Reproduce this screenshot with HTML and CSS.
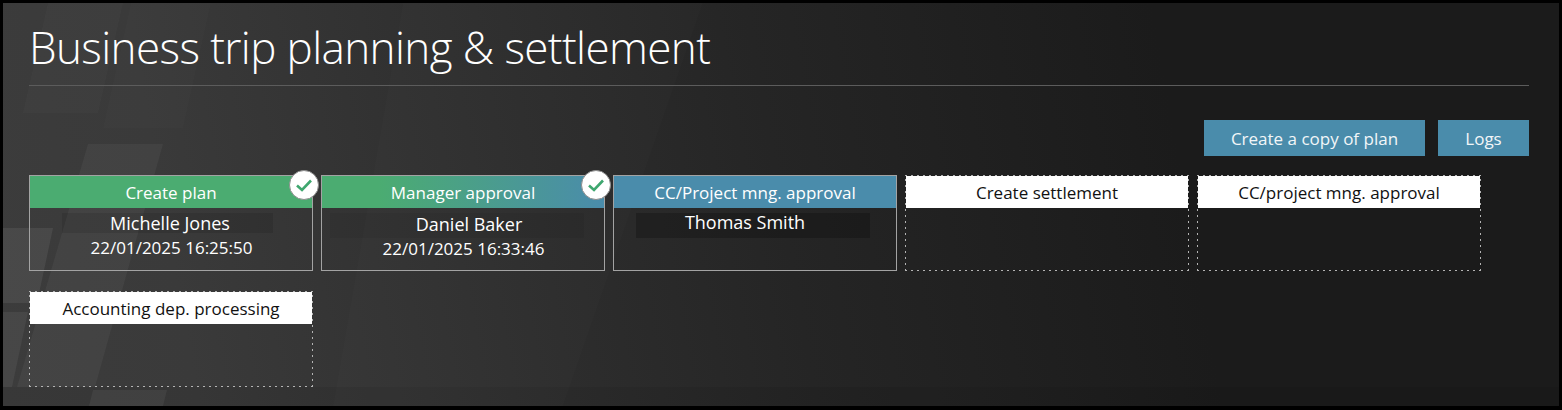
FILE: index.html
```html
<!DOCTYPE html>
<html lang="en">
<head>
    <meta charset="UTF-8">
    <title>Business trip planning &amp; settlement</title>
    <link rel="stylesheet" href="styles.css">
</head>
<body>
    <div class="frame">
        <svg class="backdrop" width="1556" height="403" viewBox="0 0 1556 403">
            <polygon points="45,0 120,0 95,110 20,110" fill="#fff" opacity="0.02"/>
            <polygon points="128,0 208,0 180,125 100,125" fill="#fff" opacity="0.012"/>
            <polygon points="85,141 160,141 92,384 14,384" fill="#fff" opacity="0.045"/>
            <polygon points="0,225 50,225 34,300 0,300" fill="#fff" opacity="0.07"/>
            <polygon points="0,309 25,309 9,384 0,384" fill="#fff" opacity="0.06"/>
            <rect x="0" y="384" width="1556" height="19" fill="#000" opacity="0.06"/>
            <polygon points="90,387 164,387 160,403 86,403" fill="#fff" opacity="0.05"/>
            <polygon points="400,0 700,0 560,403 330,403" fill="#fff" opacity="0.012"/>
        </svg>
        <div class="content">
            <h1 class="title">Business trip planning &amp; settlement</h1>
            <div class="actions">
                <button class="btn btn-copy">Create a copy of plan</button>
                <button class="btn">Logs</button>
            </div>
            <div class="steps">
                <div class="step step-done">
                    <div class="step-head head-green">Create plan</div>
                    <div class="step-name name-jones">Michelle Jones</div>
                    <div class="step-date">22/01/2025 16:25:50</div>
                    <span class="check">
                        <svg width="18" height="14" viewBox="0 0 18 14"><path d="M2 7.5 L7 12 L16 2.5" fill="none" stroke="#3fa76f" stroke-width="2.6"/></svg>
                    </span>
                </div>
                <div class="step step-done">
                    <div class="step-head head-mixed">Manager approval</div>
                    <div class="step-name name-baker">Daniel Baker</div>
                    <div class="step-date">22/01/2025 16:33:46</div>
                    <span class="check">
                        <svg width="18" height="14" viewBox="0 0 18 14"><path d="M2 7.5 L7 12 L16 2.5" fill="none" stroke="#3fa76f" stroke-width="2.6"/></svg>
                    </span>
                </div>
                <div class="step step-done">
                    <div class="step-head head-blue">CC/Project mng. approval</div>
                    <div class="step-name name-smith">Thomas Smith</div>
                </div>
                <div class="step step-todo">
                    <div class="step-head head-white">Create settlement</div>
                </div>
                <div class="step step-todo">
                    <div class="step-head head-white">CC/project mng. approval</div>
                </div>
                <div class="step step-todo">
                    <div class="step-head head-white">Accounting dep. processing</div>
                </div>
            </div>
        </div>
    </div>
</body>
</html>
```

FILE: styles.css
```css
* {
    margin: 0;
    padding: 0;
    box-sizing: border-box;
}

body {
    background: #000;
    font-family: 'Open Sans', 'Noto Sans', sans-serif;
    height: 410px;
    overflow: hidden;
    padding: 3px 3px 4px 3px;
}

.frame {
    position: relative;
    height: 403px;
    background: linear-gradient(80deg, #3c3c3c 0%, #3a3a3a 12%, #2d2d2d 35%, #252525 50%, #1b1b1b 75%);
    overflow: hidden;
}

.backdrop {
    position: absolute;
    left: 0;
    top: 0;
}

.content {
    position: relative;
    padding: 0 30px 0 26px;
}

.title {
    color: #fff;
    font-size: 44px;
    font-weight: 300;
    letter-spacing: -0.6px;
    line-height: 60px;
    padding-top: 14px;
    height: 83px;
    border-bottom: 1px solid #5c5c5c;
}

.actions {
    display: flex;
    justify-content: flex-end;
    gap: 13px;
    margin-top: 34px;
}

.btn {
    background: #4a8cab;
    border: none;
    color: #f2f6f8;
    font-family: inherit;
    font-size: 17px;
    height: 36px;
    width: 91px;
}

.btn-copy {
    width: 221px;
}

.steps {
    display: flex;
    flex-wrap: wrap;
    gap: 20px 8px;
    margin-top: 19px;
    width: 1460px;
}

.step {
    position: relative;
    width: 284px;
    height: 96px;
    color: #fff;
    font-size: 17px;
    text-align: center;
}

.step-done {
    border: 1px solid #a3a3a3;
}

/* 2px dots, 6px apart */
.step-todo {
    padding: 1px;
    background-image:
        repeating-linear-gradient(90deg, #b4b4b4 0 2px, transparent 2px 6px),
        repeating-linear-gradient(90deg, #b4b4b4 0 2px, transparent 2px 6px),
        repeating-linear-gradient(0deg, #b4b4b4 0 2px, transparent 2px 6px),
        repeating-linear-gradient(0deg, #b4b4b4 0 2px, transparent 2px 6px);
    background-size: 100% 1px, 100% 1px, 1px 100%, 1px 100%;
    background-position: 0 0, 0 100%, 0 0, 100% 0;
    background-repeat: no-repeat;
}

.step-head {
    height: 32px;
    line-height: 33px;
}

.head-green {
    background: #4bac71;
}

.head-mixed {
    background: linear-gradient(90deg, #4bac71 20%, #4a8cab 100%);
}

.head-blue {
    background: #4a8cab;
}

.head-white {
    background: #fff;
    color: #111;
}

.step-name {
    font-size: 18px;
    line-height: 21px;
    margin-top: 5px;
}

.name-jones {
    height: 20px;
    margin-left: 32px;
    margin-right: 39px;
    padding-left: 5px;
    background: rgba(0, 0, 0, 0.1);
}

.name-baker {
    height: 25px;
    line-height: 23px;
    margin-left: 8px;
    margin-right: 20px;
    padding-left: 24px;
    background: rgba(0, 0, 0, 0.05);
}

.name-smith {
    height: 25px;
    line-height: 18px;
    margin-left: 22px;
    margin-right: 26px;
    padding-right: 16px;
    background: rgba(0, 0, 0, 0.22);
}

.step-date {
    line-height: 24px;
    margin-top: 3px;
    padding-left: 1px;
}

.name-baker + .step-date {
    margin-top: -1px;
}

.check {
    position: absolute;
    right: -7px;
    top: -6px;
    width: 30px;
    height: 30px;
    border-radius: 50%;
    background: #fff;
    border: 1px solid #8d8d8d;
    display: flex;
    align-items: center;
    justify-content: center;
}
```
